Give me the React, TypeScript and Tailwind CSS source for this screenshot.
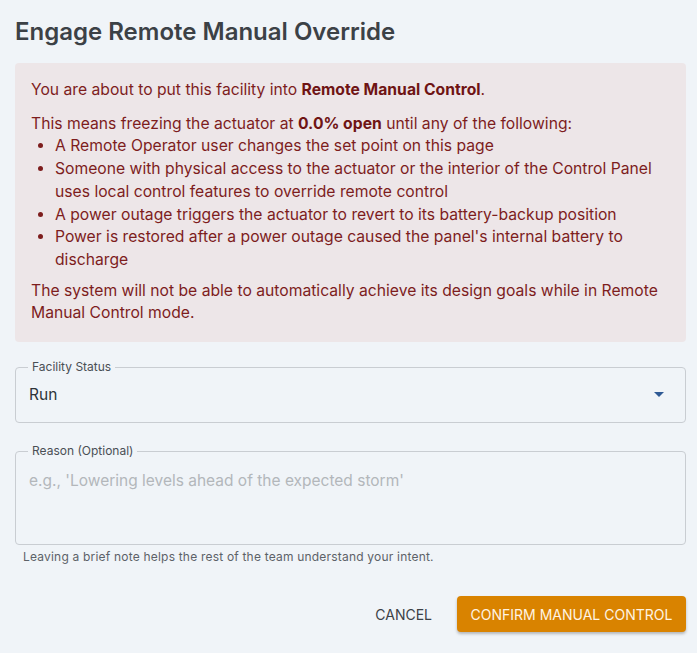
import React, { useState } from 'react';

const font = { fontFamily: 'Inter, "Noto Sans", sans-serif' };

const conditions = [
  "A Remote Operator user changes the set point on this page",
  "Someone with physical access to the actuator or the interior of the Control Panel uses local control features to override remote control",
  "A power outage triggers the actuator to revert to its battery-backup position",
  "Power is restored after a power outage caused the panel's internal battery to discharge",
];

const App = () => {
  const [status, setStatus] = useState('Run');
  const [reason, setReason] = useState('');

  return (
    <div className="min-h-screen w-full bg-[#f0f4f8]" style={font}>
      <div className="pl-[15px] pr-[11px] pt-[17px]">
        <h2 className="text-[24px] font-semibold text-[#3c4146] leading-[30px]">
          Engage Remote Manual Override
        </h2>

        {/* Warning */}
        <div className="mt-[16px] rounded-[4px] bg-[#ede6e8] pl-[16px] pr-[12px] pt-[16px] pb-[17px] text-[15.7px] leading-[22.7px] text-[#7d1d1d]">
          <p>
            You are about to put this facility into <strong className="font-bold text-[#6f1414]">Remote Manual Control</strong>.
          </p>
          <p className="mt-[11px]">
            This means freezing the actuator at <strong className="font-bold text-[#6f1414]">0.0% open</strong> until any of the following:
          </p>
          <ul className="list-disc pl-[24px]">
            {conditions.map((c) => (
              <li key={c}>{c}</li>
            ))}
          </ul>
          <p className="mt-[8px]">
            The system will not be able to automatically achieve its design goals while in Remote Manual Control mode.
          </p>
        </div>

        {/* Facility status */}
        <div className="relative mt-[25px] flex h-[56px] items-center justify-between rounded-[4px] border border-[#c9cdd2] pl-[13px] pr-[21px]">
          <span className="absolute -top-[8px] left-[12px] bg-[#f0f4f8] px-[4px] text-[12px] leading-[14px] text-[#4a4f55]">
            Facility Status
          </span>
          <span className="text-[15.5px] text-[#2e3338]">{status}</span>
          <svg width="10" height="6" viewBox="0 0 10 6" onClick={() => setStatus(status)}>
            <path d="M0 0 L10 0 L5 5 Z" fill="#2f5a95" />
          </svg>
        </div>

        {/* Reason */}
        <div className="relative mt-[28px] h-[94px] rounded-[4px] border border-[#c9cdd2] px-[13px] pt-[17px]">
          <span className="absolute -top-[8px] left-[12px] bg-[#f0f4f8] px-[4px] text-[12px] leading-[14px] text-[#4a4f55]">
            Reason (Optional)
          </span>
          <textarea
            value={reason}
            onChange={(e) => setReason(e.target.value)}
            placeholder="e.g., 'Lowering levels ahead of the expected storm'"
            className="block h-[60px] w-full resize-none bg-transparent text-[15.5px] leading-[23px] text-[#2e3338] outline-none placeholder:text-[#b3b7bb]"
          />
        </div>
        <p className="mt-[5px] pl-[8px] text-[12px] leading-[14px] text-[#5d6268] tracking-[0.2px]">
          Leaving a brief note helps the rest of the team understand your intent.
        </p>

        {/* Actions */}
        <div className="mt-[32px] flex items-center justify-end gap-[17px]">
          <button className="px-[8px] py-[6px] text-[14px] uppercase text-[#3c4146]">Cancel</button>
          <button className="h-[36px] w-[229px] rounded-[4px] bg-[#d98300] text-[14px] uppercase text-[#fff4e3] shadow-[0_2px_3px_rgba(0,0,0,0.25)]">
            Confirm Manual Control
          </button>
        </div>
      </div>
    </div>
  );
};

export default App;
